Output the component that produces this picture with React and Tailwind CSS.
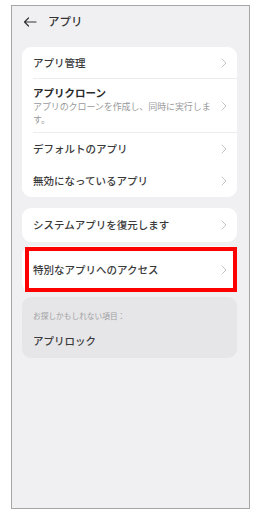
const jp = { fontFamily: '"Noto Sans CJK JP", "Noto Sans", sans-serif' };

function Chevron() {
  return (
    <svg width="6" height="10" viewBox="0 0 6 10" className="shrink-0">
      <path d="M1 1l4 4-4 4" fill="none" stroke="#c4c4c6" strokeWidth="1" strokeLinecap="round" strokeLinejoin="round" />
    </svg>
  );
}

function Row({ label, className = '' }) {
  return (
    <div className={`flex h-[32px] items-center justify-between pr-[10px] ${className}`}>
      <span className="text-[10.5px] font-medium text-[#3a3a3a]">{label}</span>
      <Chevron />
    </div>
  );
}

export default function App() {
  return (
    <div className="h-[509px] w-[254px] bg-white pl-[11px] pt-[5px]" style={jp}>
      <div className="flex h-[504px] w-[239px] flex-col border border-[#a6a6a6] bg-[#f0f0f2] px-[10px] pr-[12px]">
        <div className="flex h-[30px] items-center gap-[11px] pl-[1px] pt-[2px]">
          <svg width="14" height="10" viewBox="0 0 14 10">
            <path d="M13 5H1.5M5.5 1L1.5 5l4 4" fill="none" stroke="#333" strokeWidth="1.2" strokeLinecap="round" strokeLinejoin="round" />
          </svg>
          <span className="text-[11.5px] font-medium text-[#333]">アプリ</span>
        </div>

        <div className="mt-[11px] rounded-[9px] bg-white pl-[11px]">
          <Row label="アプリ管理" className="border-b border-[#ececee]" />
          <div className="flex h-[54px] items-center justify-between gap-[4px] border-b border-[#ececee] pr-[10px]">
            <div className="flex flex-col">
              <span className="text-[10.5px] font-bold leading-[13px] text-[#2a2a2a]">アプリクローン</span>
              <span className="mt-[1px] text-[9px] leading-[13px] tracking-[-0.1px] text-[#9a9a9c]">アプリのクローンを作成し、同時に実行します。</span>
            </div>
            <Chevron />
          </div>
          <Row label="デフォルトのアプリ" />
          <Row label="無効になっているアプリ" />
        </div>

        <div className="mt-[11px] rounded-[9px] bg-white pl-[11px]">
          <Row label="システムアプリを復元します" className="h-[34px]" />
        </div>

        <div className="relative mt-[4px] rounded-[9px] bg-white pl-[11px]">
          <Row label="特別なアプリへのアクセス" className="h-[46px] pt-[2px]" />
          <div className="absolute bottom-0 left-[3px] right-0 top-[1px] border-[4px] border-[#ff0000]" />
        </div>

        <div className="mt-[5px] flex h-[61px] flex-col rounded-[9px] bg-[#e6e6e8] pl-[11px] pt-[14px]">
          <span className="text-[7.7px] leading-[10px] text-[#a0a0a2]">お探しかもしれない項目：</span>
          <span className="mt-[13px] text-[10.5px] font-medium leading-[14px] text-[#3a3a3a]">アプリロック</span>
        </div>
      </div>
    </div>
  );
}
